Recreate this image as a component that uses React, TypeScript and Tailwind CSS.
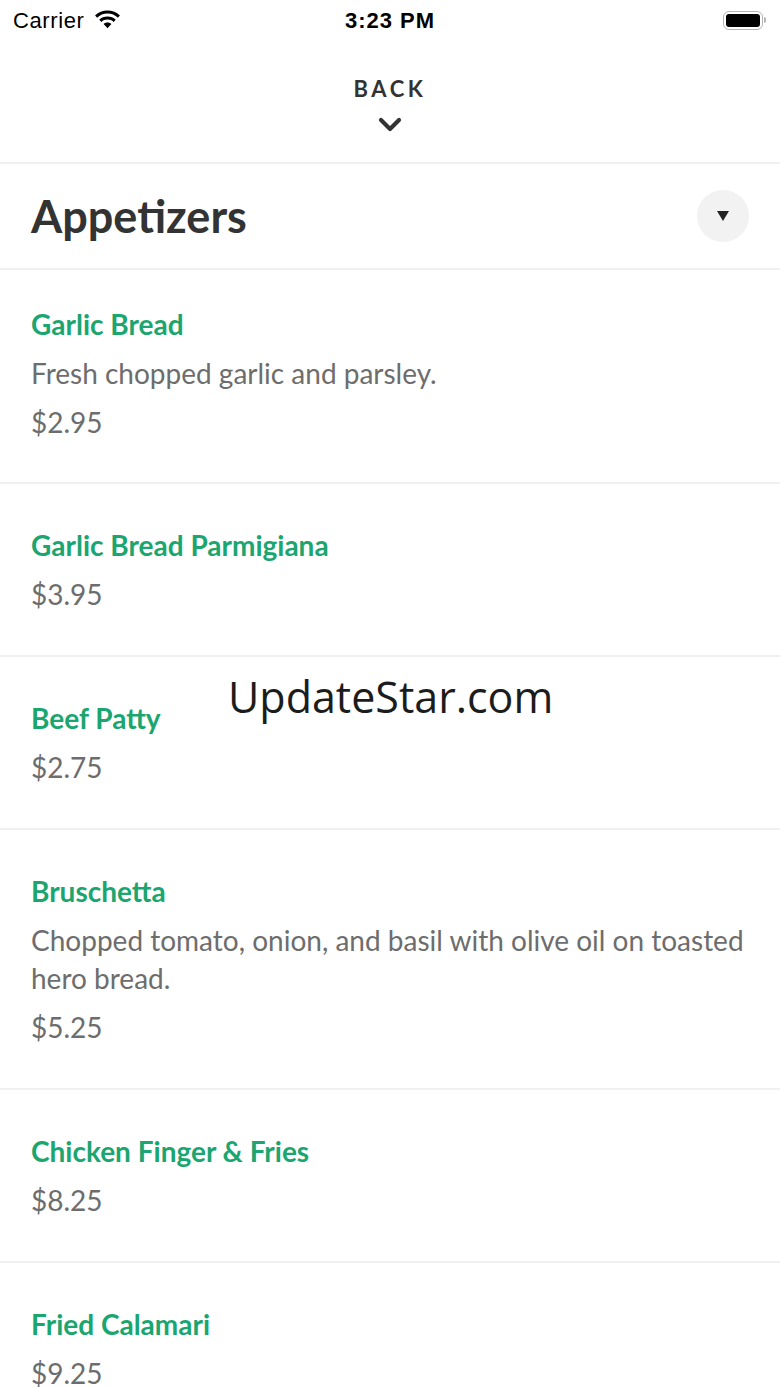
interface MenuItem {
  name: string;
  description?: string;
  price: string;
}

const ITEMS: MenuItem[] = [
  { name: "Garlic Bread", description: "Fresh chopped garlic and parsley.", price: "$2.95" },
  { name: "Garlic Bread Parmigiana", price: "$3.95" },
  { name: "Beef Patty", price: "$2.75" },
  {
    name: "Bruschetta",
    description: "Chopped tomato, onion, and basil with olive oil on toasted hero bread.",
    price: "$5.25",
  },
  { name: "Chicken Finger & Fries", price: "$8.25" },
  { name: "Fried Calamari", price: "$9.25" },
];

function StatusBar() {
  return (
    <div className="relative flex h-10 items-center justify-between pl-[13px] pr-[14px] font-['Liberation_Sans',sans-serif] text-[22px] text-black">
      <div className="flex items-center gap-[10px]">
        <span className="tracking-[0.6px]">Carrier</span>
        <svg width="27" height="20" viewBox="0 0 24 18">
          <path d="M12 3.2c3.6 0 6.9 1.4 9.3 3.7l1.9-2C20.2 2 16.3.4 12 .4S3.8 2 .8 4.9l1.9 2C5.1 4.6 8.4 3.2 12 3.2z" fill="#000" />
          <path d="M12 8.6c2.1 0 4 .8 5.5 2.1l1.9-2C17.5 7 14.9 5.9 12 5.9S6.5 7 4.6 8.7l1.9 2C8 9.4 9.9 8.6 12 8.6z" fill="#000" />
          <path d="M12 11.3c-1.3 0-2.5.5-3.5 1.3L12 16.4l3.5-3.8c-1-.8-2.2-1.3-3.5-1.3z" fill="#000" />
        </svg>
      </div>
      <span className="absolute left-1/2 -translate-x-1/2 font-bold tracking-[1px]">3:23 PM</span>
      <div className="flex items-center">
        <div className="flex h-[19px] w-[40px] items-center rounded-[6px] border-[1.5px] border-[#b5b5b5] p-[2px]">
          <div className="h-full w-full rounded-[3px] bg-black" />
        </div>
        <div className="ml-[1px] h-[6px] w-[2px] rounded-r-sm bg-[#b5b5b5]" />
      </div>
    </div>
  );
}

function Row({ item, first }: { item: MenuItem; first: boolean }) {
  return (
    <div
      className={`flex flex-col gap-[11px] border-b-2 border-[#f0f0f0] px-[31px] text-[28px] leading-[38px] ${
        first ? "pb-[41px] pt-[35px]" : "pb-[42px] pt-[42px]"
      }`}
    >
      <div className="font-bold text-[#1ba56f]">{item.name}</div>
      {item.description && <div className="text-[#6d6d6d]">{item.description}</div>}
      <div className="text-[#6d6d6d]">{item.price}</div>
    </div>
  );
}

export default function App() {
  return (
    <div className="relative h-[1387px] w-[780px] overflow-hidden bg-white font-['Lato',sans-serif]">
      <StatusBar />

      {/* Back */}
      <div className="flex h-[124px] flex-col items-center border-b-2 border-[#f0f0f0] pt-[35px]">
        <span className="text-[22px] font-bold leading-[28px] tracking-[3.6px] text-[#333]">BACK</span>
        <svg className="mt-[14px]" width="24" height="16" viewBox="0 0 24 16">
          <polyline points="3,3 12,12 21,3" fill="none" stroke="#333" strokeWidth="4.2" strokeLinecap="round" strokeLinejoin="round" />
        </svg>
      </div>

      {/* Section header */}
      <div className="flex h-[106px] items-center justify-between border-b-2 border-[#f0f0f0] px-[31px]">
        <h1 className="text-[45px] font-bold leading-none text-[#333]">Appetizers</h1>
        <div className="flex h-[52px] w-[52px] items-center justify-center rounded-full bg-[#f2f2f2]">
          <svg width="12" height="10" viewBox="0 0 12 10">
            <path d="M0 0h12L6 10z" fill="#222" />
          </svg>
        </div>
      </div>

      {ITEMS.map((item, i) => (
        <Row key={item.name} item={item} first={i === 0} />
      ))}

      {/* Watermark */}
      <div className="pointer-events-none absolute left-[228px] top-[672px] font-['Open_Sans',sans-serif] text-[43px] leading-[50px] text-[#1c1c1c]">
        UpdateStar.com
      </div>
    </div>
  );
}
